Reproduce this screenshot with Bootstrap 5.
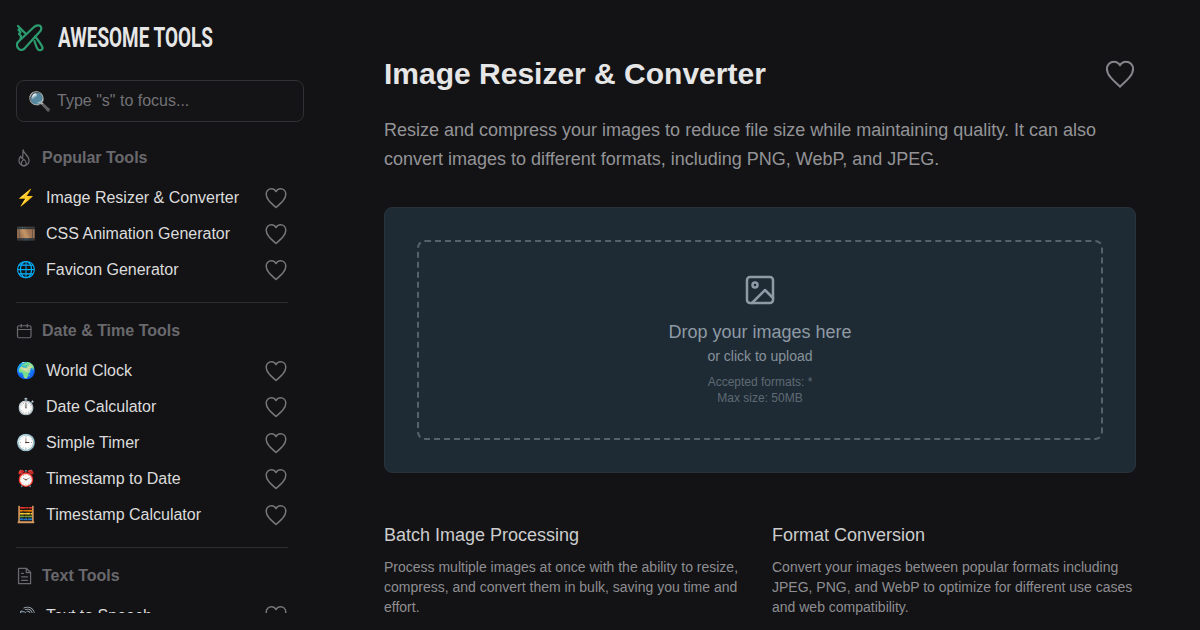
<!DOCTYPE html>
<html lang="en">
<head>
    <meta charset="UTF-8">
    <meta name="viewport" content="width=device-width, initial-scale=1.0">
    <title>Image Resizer &amp; Converter</title>
    <link href="https://cdn.jsdelivr.net/npm/bootstrap@5.3.0/dist/css/bootstrap.min.css" rel="stylesheet">
    <style>
        html, body {
            height: 630px;
            overflow: hidden;
        }

        body {
            background: #131315;
            color: #e8e8e8;
            font-family: "Liberation Sans", Arial, sans-serif;
        }

        .side-panel {
            width: 320px;
            height: 613px;
            overflow: hidden;
            padding: 24px 16px 0;
        }

        .logo-row {
            height: 28px;
            margin-bottom: 28px;
        }

        .logo-word {
            font-family: Roboto, sans-serif;
            font-size: 28px;
            font-weight: 700;
            line-height: 28px;
            color: #e6e6e6;
            white-space: nowrap;
            transform: scaleX(.675);
            transform-origin: left center;
            margin-left: 6px;
        }

        .search-box {
            width: 288px;
            height: 42px;
            padding: 0 11px;
            background: #141416;
            border: 1px solid #313135;
            border-radius: 8px;
            margin-bottom: 25px;
        }

        .search-emoji {
            width: 21px;
            font-size: 19px;
            line-height: 1;
            flex-shrink: 0;
        }

        .search-box input {
            background: transparent;
            border: 0;
            outline: 0;
            padding: 0;
            width: 220px;
            font-size: 16px;
            color: #eee;
        }

        .search-box input::placeholder {
            color: #727276;
            opacity: 1;
        }

        .group-head {
            width: 272px;
            height: 22px;
            margin-bottom: 11px;
            color: #69696d;
            font-size: 16px;
            font-weight: 700;
        }

        .tool-row {
            width: 272px;
            height: 36px;
            font-size: 16px;
            color: #dcdcdc;
        }

        .tool-emoji {
            width: 30px;
            font-size: 16px;
            font-family: "Noto Color Emoji", "Liberation Sans", sans-serif;
            flex-shrink: 0;
        }

        .side-rule {
            width: 272px;
            height: 1px;
            background: #2c2c2f;
            margin: 14px 0 17px;
        }

        .heart-line {
            fill: none;
            stroke: #77777a;
            stroke-width: 1.5;
            stroke-linejoin: round;
        }

        .content-area {
            width: 752px;
            margin-left: 64px;
            padding-top: 55px;
        }

        .page-title {
            font-size: 30px;
            font-weight: 700;
            line-height: 38px;
            color: #e6e6e6;
            margin: 0;
        }

        .page-desc {
            font-size: 18px;
            line-height: 29px;
            color: #939397;
            margin: 23px 0 33px;
        }

        .drop-outer {
            height: 266px;
            padding: 32px;
            background: #1e2b34;
            border: 1px solid #27323b;
            border-radius: 8px;
            margin-bottom: 48px;
        }

        .drop-inner {
            height: 200px;
            border: 2px dashed #56616b;
            border-radius: 8px;
            text-align: center;
            padding-top: 32px;
        }

        .drop-title {
            font-size: 18px;
            line-height: 28px;
            margin-top: 12px;
            color: #8f9aa5;
        }

        .drop-sub {
            font-size: 14px;
            line-height: 20px;
            color: #87919b;
        }

        .drop-note {
            font-size: 12px;
            line-height: 16px;
            margin-top: 8px;
            color: #5f6a74;
        }

        .feature-grid {
            display: grid;
            grid-template-columns: 364px 364px;
            column-gap: 24px;
        }

        .feature-grid h3 {
            font-size: 18px;
            font-weight: 400;
            line-height: 28px;
            color: #cdcdcd;
            margin: 0 0 8px;
        }

        .feature-grid p {
            font-size: 14px;
            line-height: 20px;
            color: #8e8e92;
            margin: 0;
        }
    </style>
</head>
<body>
    <svg width="0" height="0" class="d-block">
        <symbol id="heart" viewBox="0 0 24 24">
            <path class="heart-line" d="M12 21.5C6.5 16.5 2.2 12.8 2.2 8.2 2.2 5 4.6 2.8 7.4 2.8c1.9 0 3.6 1 4.6 2.7 1-1.7 2.7-2.7 4.6-2.7 2.8 0 5.2 2.2 5.2 5.4 0 4.6-4.3 8.3-9.8 13.3z"/>
        </symbol>
    </svg>

    <div class="d-flex">
        <aside class="side-panel flex-shrink-0">
            <div class="logo-row d-flex align-items-center gap-2">
                <svg width="28" height="28" viewBox="0 0 28 28" fill="none" stroke="#2c9c70" stroke-width="2.200" stroke-linejoin="round" stroke-linecap="round" class="flex-shrink-0">
                    <path d="M2 24c-1.500-2-1.500-4 0-6L18 3c2-2 6-2.500 7 0 .8 2 0 3.500-1.500 5L8 25c-2 1.500-4.500 1-6-1z"/>
                    <path d="M2 2l2 2-1.500 2 2 2-1.500 2 2 2-.5 3M2 2l8 8"/>
                    <path d="M19 12.500c3 3.500 6 7.500 7.500 11 .5 2.500-3 3.500-4.500 2-1.500-2-2.500-5-3.500-8.500"/>
                </svg>
                <span class="logo-word">AWESOME TOOLS</span>
            </div>

            <div class="search-box d-flex align-items-center gap-2">
                <span class="search-emoji">🔍</span>
                <input type="text" placeholder='Type "s" to focus...'>
            </div>

            <div class="group-head d-flex align-items-center gap-2">
                <svg width="18" height="18" viewBox="2.500 2 21.400 21.400" fill="none" stroke="#6b6b6f" stroke-width="1.500" stroke-linejoin="round" stroke-linecap="round"><path d="M11 3c0 4 7 7 7 12.500A6.300 6.300 0 0 1 12 22a6.300 6.300 0 0 1-6-6.500c0-2 .8-3.500 2-5 .3 1.500 1 2.500 2 3 1-3 .5-7 1-10.500z"/><path d="M12 22c-2 0-3.300-1.500-3.300-3.200 0-2 2-3 3-4.800 1.500 1.500 3 3 3 4.800 0 1.700-1 3.200-2.700 3.200z"/></svg>
                <span>Popular Tools</span>
            </div>
            <div class="tool-row d-flex align-items-center"><span class="tool-emoji">⚡</span><span class="flex-grow-1">Image Resizer &amp; Converter</span><svg width="24" height="24"><use href="#heart"/></svg></div>
            <div class="tool-row d-flex align-items-center"><span class="tool-emoji">🎞️</span><span class="flex-grow-1">CSS Animation Generator</span><svg width="24" height="24"><use href="#heart"/></svg></div>
            <div class="tool-row d-flex align-items-center"><span class="tool-emoji">🌐</span><span class="flex-grow-1">Favicon Generator</span><svg width="24" height="24"><use href="#heart"/></svg></div>
            <div class="side-rule"></div>

            <div class="group-head d-flex align-items-center gap-2">
                <svg width="18" height="18" viewBox="1 0 24 24" fill="none" stroke="#6b6b6f" stroke-width="1.600" stroke-linecap="round"><rect x="3" y="5" width="18" height="16" rx="2"/><path d="M3 10h18M8 3v4M16 3v4"/></svg>
                <span>Date &amp; Time Tools</span>
            </div>
            <div class="tool-row d-flex align-items-center"><span class="tool-emoji">🌍</span><span class="flex-grow-1">World Clock</span><svg width="24" height="24"><use href="#heart"/></svg></div>
            <div class="tool-row d-flex align-items-center"><span class="tool-emoji">⏱️</span><span class="flex-grow-1">Date Calculator</span><svg width="24" height="24"><use href="#heart"/></svg></div>
            <div class="tool-row d-flex align-items-center"><span class="tool-emoji">🕒</span><span class="flex-grow-1">Simple Timer</span><svg width="24" height="24"><use href="#heart"/></svg></div>
            <div class="tool-row d-flex align-items-center"><span class="tool-emoji">⏰</span><span class="flex-grow-1">Timestamp to Date</span><svg width="24" height="24"><use href="#heart"/></svg></div>
            <div class="tool-row d-flex align-items-center"><span class="tool-emoji">🧮</span><span class="flex-grow-1">Timestamp Calculator</span><svg width="24" height="24"><use href="#heart"/></svg></div>
            <div class="side-rule"></div>

            <div class="group-head d-flex align-items-center gap-2">
                <svg width="18" height="18" viewBox="2 1.500 21 21" fill="none" stroke="#6b6b6f" stroke-width="1.500" stroke-linejoin="round" stroke-linecap="round"><path d="M5 3h9l5 5v13H5z"/><path d="M14 3v5h5M8.500 13h7M8.500 17h7M8.500 9h2"/></svg>
                <span>Text Tools</span>
            </div>
            <div class="tool-row d-flex align-items-center"><span class="tool-emoji">🔊</span><span class="flex-grow-1">Text to Speech</span><svg width="24" height="24"><use href="#heart"/></svg></div>
        </aside>

        <main class="content-area">
            <div class="d-flex justify-content-between align-items-center">
                <h1 class="page-title">Image Resizer &amp; Converter</h1>
                <svg width="32" height="32" viewBox="0 0 24 24"><path d="M12 21.500C6.500 16.500 2.200 12.800 2.200 8.200 2.200 5 4.600 2.800 7.400 2.800c1.900 0 3.600 1 4.600 2.700 1-1.700 2.700-2.700 4.600-2.700 2.800 0 5.200 2.200 5.200 5.400 0 4.600-4.300 8.300-9.800 13.300z" fill="none" stroke="#85858a" stroke-width="1.500" stroke-linejoin="round"/></svg>
            </div>
            <p class="page-desc">Resize and compress your images to reduce file size while maintaining quality. It can also convert images to different formats, including PNG, WebP, and JPEG.</p>

            <div class="drop-outer">
                <div class="drop-inner">
                    <svg width="32" height="32" viewBox="0 0 32 32" fill="none" stroke="#8f9aa5" stroke-width="2.500" stroke-linejoin="round" stroke-linecap="round"><rect x="3" y="3" width="26" height="26" rx="3"/><circle cx="11" cy="11" r="2.500"/><path d="M8 29L21 16l8 8"/></svg>
                    <div class="drop-title">Drop your images here</div>
                    <div class="drop-sub">or click to upload</div>
                    <div class="drop-note">Accepted formats: *<br>Max size: 50MB</div>
                </div>
            </div>

            <div class="feature-grid">
                <div>
                    <h3>Batch Image Processing</h3>
                    <p>Process multiple images at once with the ability to resize, compress, and convert them in bulk, saving you time and effort.</p>
                </div>
                <div>
                    <h3>Format Conversion</h3>
                    <p>Convert your images between popular formats including JPEG, PNG, and WebP to optimize for different use cases and web compatibility.</p>
                </div>
            </div>
        </main>
    </div>

    <script src="https://cdn.jsdelivr.net/npm/bootstrap@5.3.0/dist/js/bootstrap.bundle.min.js"></script>
</body>
</html>
